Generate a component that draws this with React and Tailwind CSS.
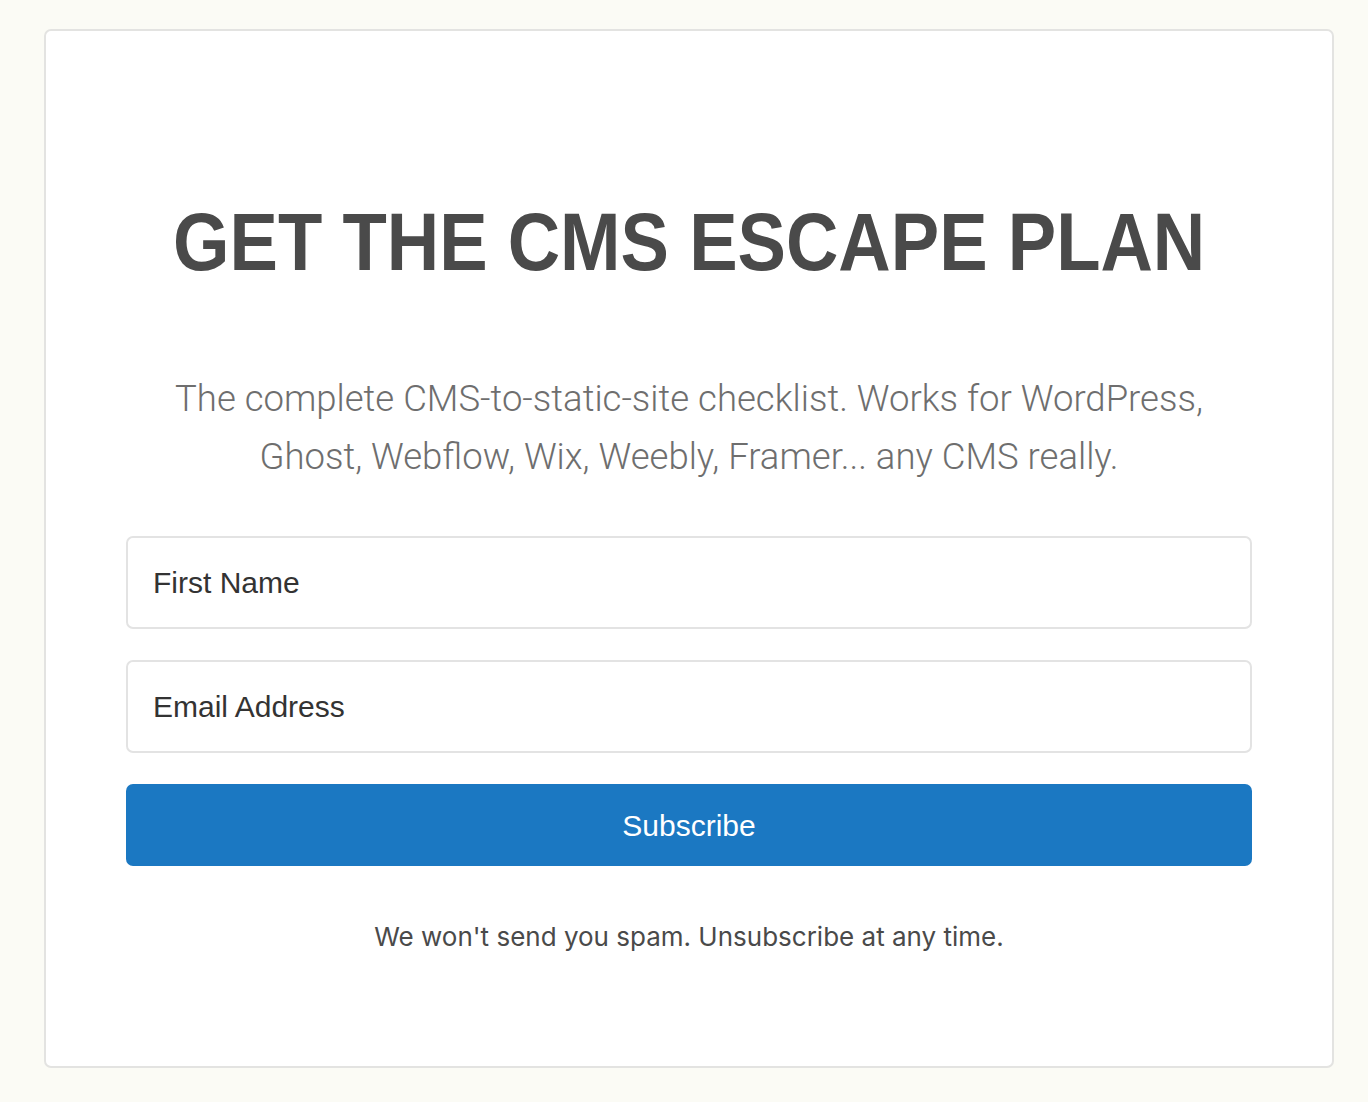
export default function App() {
  return (
    <div className="min-h-[1102px] bg-[#fbfbf5] pl-[44px] pr-[34px] pt-[29px] pb-[34px]">
      <div className="h-[1039px] border-2 border-[#e3e3e1] rounded-[7px] bg-white px-[80px] flex flex-col items-center">
        <h1 className="mt-[170px] text-[#4a4a4a] font-bold text-[82px] leading-[82px] whitespace-nowrap scale-x-[0.885] font-['Liberation_Sans',Arial,sans-serif]">
          GET THE CMS ESCAPE PLAN
        </h1>
        <p className="mt-[87px] text-center text-[#6e6e6e] text-[36.5px] leading-[58px] font-light font-['Roboto','Liberation_Sans',sans-serif]">
          The complete CMS-to-static-site checklist. Works for WordPress,
          <br />
          Ghost, Webflow, Wix, Weebly, Framer... any CMS really.
        </p>
        <div className="mt-[50px] w-full flex flex-col gap-[31px] font-['Liberation_Sans',Arial,sans-serif]">
          <div className="h-[93px] border-2 border-[#e3e3e3] rounded-[7px] flex items-center px-[25px] text-[30px] text-[#333333]">
            First Name
          </div>
          <div className="h-[93px] border-2 border-[#e3e3e3] rounded-[7px] flex items-center px-[25px] text-[30px] text-[#333333]">
            Email Address
          </div>
          <button className="h-[82px] rounded-[7px] bg-[#1b78c2] text-white text-[30px] flex items-center justify-center">
            Subscribe
          </button>
        </div>
        <p className="mt-[55px] text-[26px] leading-[32px] text-[#4a4a4a] font-['Inter','Liberation_Sans',sans-serif]">
          We won't send you spam. Unsubscribe at any time.
        </p>
      </div>
    </div>
  );
}
